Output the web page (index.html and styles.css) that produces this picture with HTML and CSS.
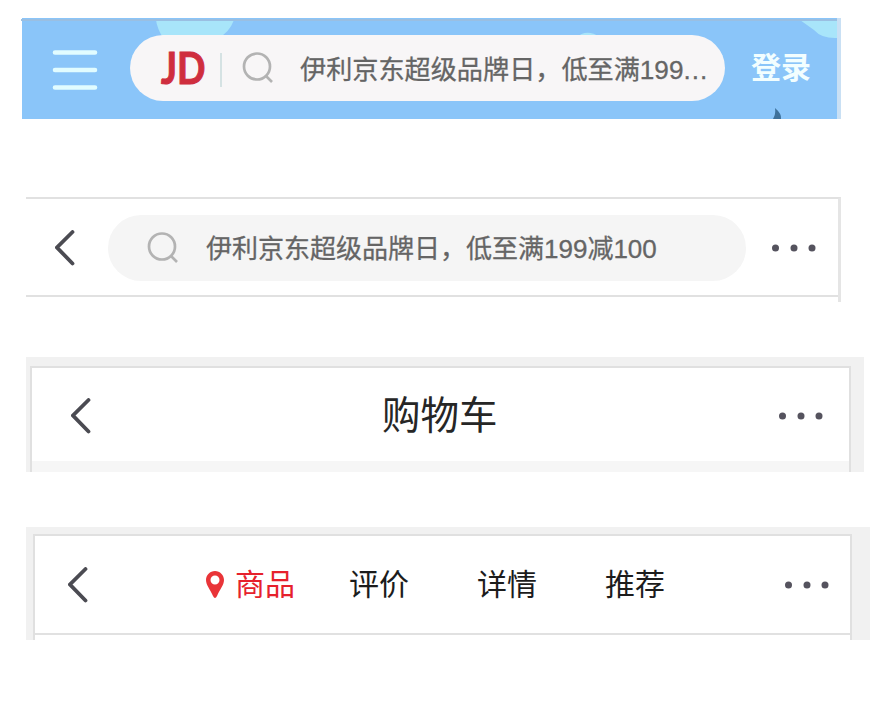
FILE: index.html
```html
<!DOCTYPE html>
<html lang="zh-CN">
<head>
<meta charset="utf-8">
<title>导航栏</title>
<link rel="stylesheet" href="styles.css">
</head>
<body>
<header class="bar home">
  <svg class="sky" viewBox="0 0 820 101" aria-hidden="true">
    <path fill="#a8e5fa" d="M135 2H213Q208 15 197 20H142Q136 10 135 2ZM555 20Q565 10 579 19ZM779 2H817V20Q801 21 793 12Z"/>
    <path fill="#9abfe2" d="M0 1H817V3H0Z"/>
    <path fill="#c9e0f4" d="M816 0H820V101H816Z"/>
    <path fill="#3e719b" d="M752 101Q755 96 754 90Q761 96 760 101Z"/>
  </svg>
  <svg class="menu" viewBox="0 0 46 42"><path d="M3 3.500H43M3 21H43M3 38.500H43" stroke="#e1fcff" stroke-width="4.600" stroke-linecap="round"/></svg>
  <div class="search light">
    <span class="logo">JD</span>
    <span class="divider"></span>
    <svg class="lens" viewBox="0 0 32 32"><circle cx="15" cy="14.500" r="13"/><path d="M24 24L30 30"/></svg>
    <span class="query">伊利京东超级品牌日，低至满199<span class="ellipsis">...</span></span>
  </div>
  <a class="login">登录</a>
</header>

<header class="bar results">
  <svg class="back" viewBox="0 0 20 36"><path d="M17.500 2L2 17.500L17.500 33.500"/></svg>
  <div class="search gray">
    <svg class="lens" viewBox="0 0 32 32"><circle cx="15" cy="14.500" r="13"/><path d="M24 24L30 30"/></svg>
    <span class="query">伊利京东超级品牌日，低至满199减100</span>
  </div>
  <svg class="more" viewBox="0 0 46 8"><circle cx="4.500" cy="4" r="3.500"/><circle cx="23" cy="4" r="3.500"/><circle cx="41" cy="4" r="3.500"/></svg>
</header>

<section class="frame cart-frame">
  <header class="bar cart">
    <svg class="back" viewBox="0 0 20 36"><path d="M17.500 2L2 17.500L17.500 33.500"/></svg>
    <h1>购物车</h1>
    <svg class="more" viewBox="0 0 46 8"><circle cx="4.500" cy="4" r="3.500"/><circle cx="23" cy="4" r="3.500"/><circle cx="41" cy="4" r="3.500"/></svg>
  </header>
</section>

<section class="frame detail-frame">
  <header class="bar detail">
    <svg class="back" viewBox="0 0 20 36"><path d="M17.500 2L2 17.500L17.500 33.500"/></svg>
    <nav>
      <a class="active"><svg class="pin" viewBox="0 0 18 27"><path fill-rule="evenodd" d="M9 0C4 0 0 4 0 9C0 14 4 18 7 25Q9 29 11 25C14 18 18 14 18 9C18 4 14 0 9 0ZM9 4.500A4.500 4.500 0 1 1 9 13.500A4.500 4.500 0 1 1 9 4.500Z"/></svg><span>商品</span></a>
      <a>评价</a>
      <a>详情</a>
      <a>推荐</a>
    </nav>
    <svg class="more" viewBox="0 0 46 8"><circle cx="4.500" cy="4" r="3.500"/><circle cx="23" cy="4" r="3.500"/><circle cx="41" cy="4" r="3.500"/></svg>
  </header>
</section>
</body>
</html>
```
FILE: styles.css
```css
* { box-sizing: border-box; }
body {
  margin: 0;
  padding-top: 18px;
  background: #fff;
  font-family: "Liberation Sans", "Noto Sans CJK SC", sans-serif;
}
svg { display: block; flex: none; }
.bar { display: flex; align-items: center; }
.home {
  position: relative;
  width: 820px;
  height: 101px;
  margin-left: 21px;
  padding-left: 31px;
  background: linear-gradient(to right, #fff 0 1px, #8ac5f9 1px);
}
.sky { position: absolute; left: 0; top: 0; width: 820px; height: 101px; }
.menu { position: relative; width: 46px; height: 42px; margin-top: 3px; }
.search { display: flex; align-items: center; height: 66px; border-radius: 33px; }
.light { position: relative; width: 595px; margin-left: 32px; margin-top: -1px; padding-left: 31px; background: #f8f6f7; }
.gray { width: 638px; margin-left: 33px; padding-left: 39px; background: #f5f5f5; }
.logo {
  width: 45px;
  color: #cf2e3e;
  font: 700 43px/66px Lato, sans-serif;
  -webkit-text-stroke: 1px #cf2e3e;
  transform: scaleX(0.87);
  transform-origin: left;
}
.divider { width: 2px; height: 34px; margin: 4px 20px 0 14px; background: #d5e2e3; }
.lens { width: 32px; height: 32px; fill: none; stroke: #b3b3b3; stroke-width: 2.700; }
.query {
  margin-left: 26px;
  padding-top: 4px;
  color: #656565;
  font-size: 26.150px;
  line-height: 40px;
  white-space: nowrap;
  -webkit-text-stroke: 0.300px #656565;
}
.ellipsis { letter-spacing: 1px; }
.gray .query { padding-top: 2px; font-size: 26px; margin-left: 27px; }
.login { position: relative; margin: -8px 0 0 26px; color: #f2feff; font-size: 30px; font-weight: 700; }
.results {
  width: 815px;
  height: 105px;
  margin: 78px 0 0 26px;
  padding: 0 0 6px 29px;
  border-top: 2px solid #e1e1e1;
  border-right: 3px solid #e5e5e5;
  background: linear-gradient(#e1e1e1, #e1e1e1) 0 96px / 100% 2px no-repeat;
}
.back { width: 20px; height: 36px; fill: none; stroke: #4b4b52; stroke-width: 3.800; stroke-linecap: round; }
.more { width: 46px; height: 8px; fill: #55535e; }
.results .more { margin-left: 25px; }
.frame { margin-left: 26px; background: #f1f1f1; }
.cart-frame { width: 838px; height: 115px; margin-top: 55px; padding: 9px 13px 0 4px; }
.cart {
  height: 106px;
  padding: 0 25px 8px 39px;
  border: solid #e0e0e0;
  border-width: 2px 2px 0;
  background: linear-gradient(#fff 0 93px, #f6f6f6 93px);
}
h1 { margin: 0 auto 0 291px; color: #262626; font-size: 38.500px; font-weight: 400; line-height: 56px; }
.detail-frame { width: 844px; height: 113px; margin-top: 55px; padding: 7px 18px 0 7px; }
.detail {
  height: 106px;
  padding: 0 20px 7px 33px;
  border: solid #e0e0e0;
  border-width: 2px 2px 0;
  background: linear-gradient(#fff 0 97px, #e1e1e1 97px 99px, #fff 99px);
}
nav { display: flex; gap: 68px; margin: 0 auto 0 118px; color: #1c1c1c; font-size: 30px; line-height: 44px; }
nav a { display: flex; align-items: center; }
nav .active { margin-right: -14px; color: #e6212c; }
.pin { width: 18px; height: 27px; margin-right: 11px; fill: #e93438; }
```
